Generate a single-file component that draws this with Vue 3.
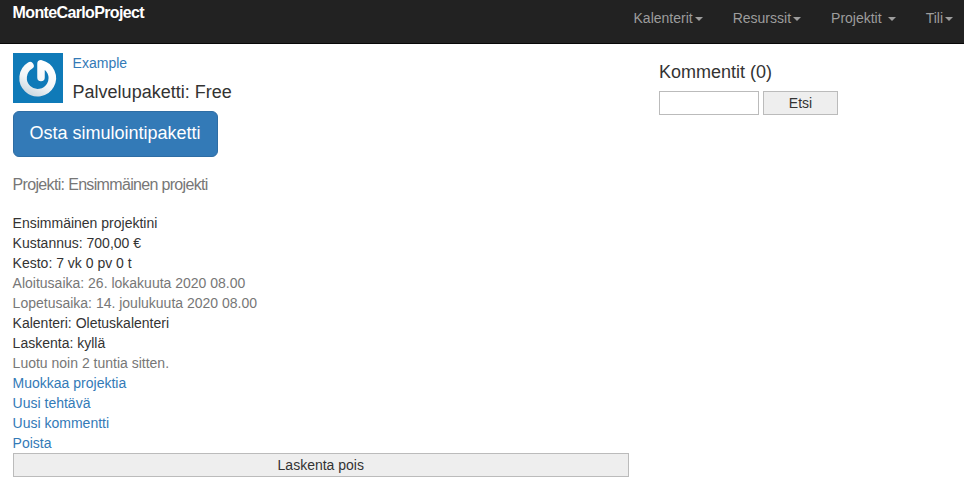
<script setup>
const navItems = [
  { label: 'Kalenterit', spaced: false },
  { label: 'Resurssit', spaced: false },
  { label: 'Projektit', spaced: true },
  { label: 'Tili', spaced: false },
]
</script>

<template>
  <div class="page">
    <nav class="navbar">
      <a class="brand">MonteCarloProject</a>
      <ul class="nav">
        <li v-for="item in navItems" :key="item.label" :class="{ spaced: item.spaced }">
          {{ item.label }}<span class="caret"></span>
        </li>
      </ul>
    </nav>
    <div class="content">
      <main class="main">
        <div class="media">
          <svg class="avatar" viewBox="0 0 50 50" width="50" height="50">
            <defs>
              <linearGradient id="ring" x1="0.7" y1="0" x2="0.2" y2="1">
                <stop offset="0" stop-color="#ffffff" />
                <stop offset="0.6" stop-color="#f2f5f7" />
                <stop offset="1" stop-color="#cfdbe3" />
              </linearGradient>
            </defs>
            <rect width="50" height="50" fill="#0f7ab8" />
            <path d="M28 24.5 V10.8 A14.6 14.6 0 1 1 17 12.6" fill="none" stroke="url(#ring)" stroke-width="7.5" stroke-linecap="round" stroke-linejoin="round" />
          </svg>
          <div class="media-body">
            <a class="link">Example</a>
            <div class="plan">Palvelupaketti: Free</div>
          </div>
        </div>
        <button class="buy">Osta simulointipaketti</button>
        <h4 class="project-title">Projekti: Ensimmäinen projekti</h4>
        <div class="details">
          <div>Ensimmäinen projektini</div>
          <div>Kustannus: 700,00 €</div>
          <div>Kesto: 7 vk 0 pv 0 t</div>
          <div class="muted">Aloitusaika: 26. lokakuuta 2020 08.00</div>
          <div class="muted">Lopetusaika: 14. joulukuuta 2020 08.00</div>
          <div>Kalenteri: Oletuskalenteri</div>
          <div>Laskenta: kyllä</div>
          <div class="muted">Luotu noin 2 tuntia sitten.</div>
          <div><a class="link">Muokkaa projektia</a></div>
          <div><a class="link">Uusi tehtävä</a></div>
          <div><a class="link">Uusi kommentti</a></div>
          <div><a class="link">Poista</a></div>
        </div>
        <button class="plain wide">Laskenta pois</button>
      </main>
      <aside class="side">
        <h4 class="comments">Kommentit (0)</h4>
        <form class="search" @submit.prevent>
          <input class="field" type="text" />
          <button class="plain etsi">Etsi</button>
        </form>
      </aside>
    </div>
  </div>
</template>

<style>
html, body { margin: 0; background: #fff; }
</style>

<style scoped>
.page {
  font-family: "Liberation Sans", Arial, sans-serif;
  font-size: 14px;
  line-height: 20px;
  color: #333;
}
.navbar {
  display: flex;
  justify-content: space-between;
  height: 43px;
  background: #222;
  border-bottom: 1px solid #080808;
}
.brand {
  margin-left: 12.6px;
  padding-top: 3px;
  font-size: 16px;
  font-weight: 700;
  letter-spacing: -0.64px;
  color: #fff;
}
.nav {
  display: flex;
  margin: 0;
  padding: 0;
  list-style: none;
  color: #9d9d9d;
}
.nav li { padding: 8px 11px 0 19px; }
.caret {
  display: inline-block;
  vertical-align: middle;
  margin-left: 2px;
  width: 0;
  height: 0;
  border-top: 4px solid #9d9d9d;
  border-left: 4px solid transparent;
  border-right: 4px solid transparent;
}
.spaced .caret { margin-left: 6px; }
.content {
  display: flex;
  padding: 9px 13px 0 12.6px;
}
.main { width: 616.4px; }
.side { margin-left: 30px; padding-top: 9px; }
.media { display: flex; }
.avatar { display: block; flex: none; }
.media-body { margin-left: 10px; }
.link { color: #337ab7; }
.plan { margin-top: 9px; font-size: 18px; line-height: 20px; }
.buy {
  display: block;
  margin-top: 8px;
  width: 205px;
  height: 46px;
  padding: 0;
  background: #337ab7;
  border: 1px solid #2e6da4;
  border-radius: 6px;
  color: #fff;
  font: 18px/1.33 "Liberation Sans", Arial, sans-serif;
}
.project-title {
  margin: 19px 0 19px;
  font-size: 16px;
  font-weight: 400;
  line-height: 18px;
  letter-spacing: -0.67px;
  color: #777;
}
.muted { color: #777; }
.plain {
  height: 24px;
  padding: 0;
  background: #eee;
  border: 1px solid #bbb;
  color: #333;
  font: 14px/20px "Liberation Sans", Arial, sans-serif;
}
.wide { display: block; width: 100%; }
.comments {
  margin: 0 0 9px;
  font-size: 18px;
  font-weight: 400;
  line-height: 20px;
}
.search { display: flex; gap: 4px; }
.field {
  box-sizing: border-box;
  width: 100px;
  height: 24px;
  padding: 1px 2px;
  background: #fff;
  border: 1px solid #bbb;
}
.etsi { width: 75px; }
</style>
